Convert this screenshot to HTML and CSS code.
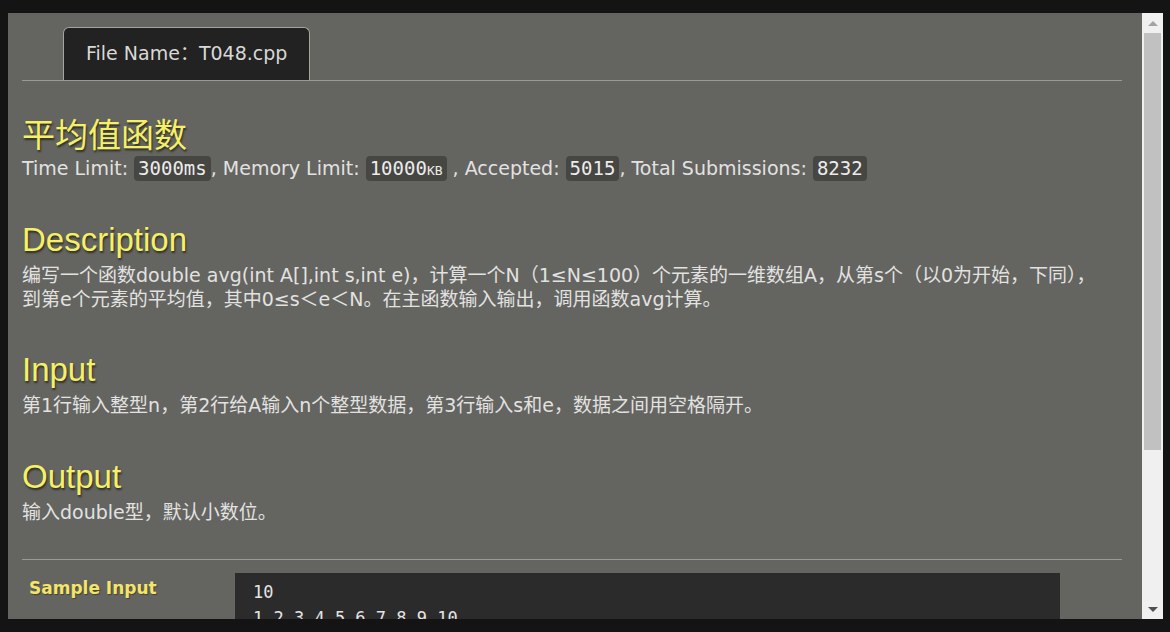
FILE: index.html
```html
<!DOCTYPE html>
<html lang="zh">
<head>
<meta charset="utf-8">
<title>平均值函数</title>
<link rel="stylesheet" href="styles.css">
</head>
<body>
<div class="screen">
  <div class="window">
    <div class="viewport">
      <div class="content">
        <div class="tabbar">
          <div class="tab">File Name：T048.cpp</div>
        </div>

        <h1 class="title">平均值函数</h1>
        <div class="meta">Time Limit: <span class="badge">3000ms</span>, Memory Limit: <span class="badge">10000<span class="sc">kb</span></span> , Accepted: <span class="badge">5015</span>, Total Submissions: <span class="badge">8232</span></div>

        <h2 class="section-title desc">Description</h2>
        <p class="section-text">编写一个函数double avg(int A[],int s,int e)，计算一个N（1≤N≤100）个元素的一维数组A，从第s个（以0为开始，下同），<br>到第e个元素的平均值，其中0≤s＜e＜N。在主函数输入输出，调用函数avg计算。</p>

        <h2 class="section-title">Input</h2>
        <p class="section-text">第1行输入整型n，第2行给A输入n个整型数据，第3行输入s和e，数据之间用空格隔开。</p>

        <h2 class="section-title out">Output</h2>
        <p class="section-text">输入double型，默认小数位。</p>

        <div class="divider"></div>

        <div class="sample">
          <div class="sample-label">Sample Input</div>
          <pre class="sample-code">10
1 2 3 4 5 6 7 8 9 10</pre>
        </div>
      </div>
    </div>
    <div class="scrollbar" aria-hidden="true">
      <div class="sb-btn"><span class="arrow-up"></span></div>
      <div class="sb-track">
        <div class="sb-thumb"></div>
      </div>
      <div class="sb-btn"><span class="arrow-down"></span></div>
    </div>
  </div>
</div>
</body>
</html>
```

FILE: styles.css
```css
html, body {
  margin: 0;
  padding: 0;
  background: #141414;
}

.screen {
  box-sizing: border-box;
  width: 1170px;
  height: 632px;
  padding: 13px 7px 13px 8px;
}

.window {
  height: 606px;
  display: flex;
  background: #646460;
  font-family: "DejaVu Sans", "Noto Sans CJK SC", sans-serif;
  color: #e2e2e0;
}

.viewport {
  flex: 1;
  overflow: hidden;
}

/* scrollbar drawn as a column */
.scrollbar {
  width: 21px;
  display: flex;
  flex-direction: column;
  background: #f0f0f0;
}

.sb-btn {
  height: 20px;
  display: flex;
  align-items: center;
  justify-content: center;
}

.arrow-up {
  width: 0;
  height: 0;
  border-left: 5px solid transparent;
  border-right: 5px solid transparent;
  border-bottom: 5px solid #a3a3a3;
}

.arrow-down {
  width: 0;
  height: 0;
  border-left: 5px solid transparent;
  border-right: 5px solid transparent;
  border-top: 5px solid #505050;
}

.sb-track {
  flex: 1;
  padding: 0 2px;
}

.sb-thumb {
  height: 417px;
  background: #c1c1c1;
}

.content {
  padding: 0 20px 0 14px;
}

.tabbar {
  padding: 14px 0 0 41px;
  border-bottom: 1px solid #9a9a95;
  display: flex;
}

.tab {
  height: 52px;
  padding: 0 22px;
  background: #222222;
  border: 1px solid #a5a5a0;
  border-bottom: none;
  border-radius: 6px 6px 0 0;
  color: #d8d8d6;
  font-size: 19px;
  line-height: 50px;
}

.title {
  margin: 32px 0 0;
  font-family: "Noto Sans CJK SC", "Liberation Sans", sans-serif;
  font-weight: normal;
  font-size: 33px;
  line-height: 40px;
  color: #f5f064;
  text-shadow: 1px 2px 2px rgba(0, 0, 0, 0.55);
}

.meta {
  margin-top: 2px;
  font-size: 19px;
  line-height: 26px;
}

.badge {
  display: inline-block;
  background: #464643;
  border-radius: 4px;
  padding: 0 4px;
  font-family: "DejaVu Sans Mono", monospace;
  font-size: 19px;
  line-height: 25px;
  color: #ececea;
}

.sc {
  font-variant: small-caps;
}

.section-title {
  margin: 39px 0 0;
  font-family: "Liberation Sans", Arial, sans-serif;
  font-weight: normal;
  font-size: 33px;
  line-height: 40px;
  color: #f5f064;
  text-shadow: 1px 2px 2px rgba(0, 0, 0, 0.55);
}

.section-title.out {
  margin-top: 40px;
}

.section-text {
  margin: 3px 0 0;
  font-size: 19px;
  line-height: 24px;
}

.divider {
  margin-top: 35px;
  border-top: 1px solid #9a9a95;
}

.sample {
  display: grid;
  grid-template-columns: 213px 825px;
  margin-top: 13px;
}

.sample-label {
  padding: 2px 0 0 7px;
  font-weight: bold;
  font-size: 17px;
  line-height: 26px;
  color: #f2e56a;
  text-shadow: 1px 1px 1px rgba(0, 0, 0, 0.35);
}

.sample-code {
  margin: 0;
  padding: 6px 18px 8px;
  background: #2b2b2b;
  font-family: "DejaVu Sans Mono", monospace;
  font-size: 17px;
  line-height: 26px;
  color: #e4e4e2;
}
```
